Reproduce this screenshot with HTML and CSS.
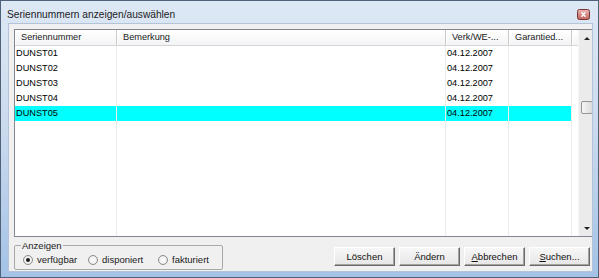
FILE: index.html
```html
<!DOCTYPE html>
<html lang="de">
<head>
	<meta charset="UTF-8">
	<title>Seriennummern anzeigen/auswählen</title>
	<link rel="stylesheet" href="styles.css">
</head>
<body>
	<div class="window">
		<div class="titlebar">
			<span class="title">Seriennummern anzeigen/auswählen</span>
			<svg class="close" width="13" height="11" viewBox="0 0 13 11">
				<defs>
					<linearGradient id="cg" x1="0" y1="0" x2="0" y2="1">
						<stop offset="0" stop-color="#ebb9b6"/>
						<stop offset="1" stop-color="#c0625e"/>
					</linearGradient>
				</defs>
				<rect x="0.5" y="0.5" width="12" height="10" rx="2" fill="url(#cg)" stroke="#7a3532"/>
				<path d="M4.5 3.3 L8.5 7.7 M8.5 3.3 L4.5 7.7" stroke="#fff" stroke-width="1.3"/>
			</svg>
		</div>

		<div class="client">
			<!-- Liste im Report-Modus -->
			<div class="listview">
				<div class="lv-main">
					<div class="lv-head">
						<div class="hcell c1">Seriennummer</div>
						<div class="hcell c2">Bemerkung</div>
						<div class="hcell c3">Verk/WE-...</div>
						<div class="hcell c4">Garantied...</div>
						<div class="hcell fill"></div>
					</div>
					<div class="lv-body">
						<div class="col c1">
							<div class="cell">DUNST01</div>
							<div class="cell">DUNST02</div>
							<div class="cell">DUNST03</div>
							<div class="cell">DUNST04</div>
							<div class="cell sel">DUNST05</div>
						</div>
						<div class="col c2">
							<div class="cell"></div>
							<div class="cell"></div>
							<div class="cell"></div>
							<div class="cell"></div>
							<div class="cell sel"></div>
						</div>
						<div class="col c3">
							<div class="cell">04.12.2007</div>
							<div class="cell">04.12.2007</div>
							<div class="cell">04.12.2007</div>
							<div class="cell">04.12.2007</div>
							<div class="cell sel">04.12.2007</div>
						</div>
						<div class="col c4">
							<div class="cell"></div>
							<div class="cell"></div>
							<div class="cell"></div>
							<div class="cell"></div>
							<div class="cell sel"></div>
						</div>
						<div class="col fill"></div>
					</div>
				</div>
				<div class="scrollbar">
					<div class="sb-btn"><span class="arrow up"></span></div>
					<div class="sb-track"><div class="sb-thumb"></div></div>
					<div class="sb-btn"><span class="arrow down"></span></div>
				</div>
			</div>

			<div class="bottom">
				<fieldset class="group">
					<legend>Anzeigen</legend>
					<div class="radios">
						<label class="opt o1"><span class="radio on"></span>verfügbar</label>
						<label class="opt o2"><span class="radio"></span>disponiert</label>
						<label class="opt"><span class="radio"></span>fakturiert</label>
					</div>
				</fieldset>
				<div class="buttons">
					<button>Löschen</button>
					<button>Ändern</button>
					<button><u>A</u>bbrechen</button>
					<button><u>S</u>uchen...</button>
				</div>
			</div>
		</div>
	</div>
</body>
</html>
```

FILE: styles.css
```css
html,body {
	margin: 0;
	padding: 0;
}
body {
	width: 599px;
	height: 278px;
	overflow: hidden;
	font-family: "Liberation Sans", Arial, sans-serif;
	font-size: 9.2px;
	color: #000;
}
.window {
	box-sizing: border-box;
	width: 599px;
	height: 278px;
	border: 1px solid #4f6278;
	padding: 0 5px 5px 7px;
	background: linear-gradient(#dde8f5, #cbdbee 45%, #a3c2e6);
	display: flex;
	flex-direction: column;
}
.titlebar {
	box-sizing: border-box;
	height: 22px;
	padding-top: 6px;
	display: flex;
	align-items: flex-start;
}
.title {
	flex: 1;
	font-size: 10.2px;
	line-height: 16px;
	color: #1c1c1c;
	margin-left: -1px;
}
.close {
	margin-top: 2px;
	margin-right: 3px;
}
.client {
	flex: 1;
	box-sizing: border-box;
	border: 1px solid #b3c4d8;
	background: #f0f0f0;
	padding: 5px 0 0 5px;
	display: flex;
	flex-direction: column;
	overflow: hidden;
}

/* Listview */
.listview {
	box-sizing: border-box;
	height: 208px;
	border: 1px solid #828790;
	border-right: 0;
	background: #fff;
	display: flex;
}
.lv-main {
	flex: 1;
	display: flex;
	flex-direction: column;
}
.lv-head {
	display: flex;
	height: 16px;
	box-sizing: border-box;
	border-bottom: 1px solid #d5d5d5;
	background: linear-gradient(#ffffff, #f3f4f6);
}
.hcell {
	box-sizing: border-box;
	border-right: 1px solid #c9c9c9;
	box-shadow: inset 1px 0 #fff;
	padding-left: 6px;
	line-height: 15px;
	color: #1a1a1a;
	white-space: nowrap;
}
.c1 { width: 102px; }
.c2 { width: 329px; }
.c3 { width: 63px; }
.c4 { width: 63px; }
.fill { flex: 1; border-right: 0; }
.lv-body {
	flex: 1;
	display: flex;
}
.col {
	box-sizing: border-box;
	border-right: 1px solid #ececec;
}
.col.fill {
	border-right: 0;
}
.cell {
	height: 15px;
	line-height: 15px;
	padding-left: 1px;
	white-space: nowrap;
}
.cell.sel {
	background: #00ffff;
}

/* Scrollbar */
.scrollbar {
	width: 13px;
	display: flex;
	flex-direction: column;
	background: #ebebeb;
	border-left: 1px solid #f6f6f6;
}
.sb-btn {
	height: 16px;
	display: flex;
	align-items: center;
	justify-content: center;
	padding-left: 3px;
}
.arrow {
	width: 0;
	height: 0;
	border-left: 3px solid transparent;
	border-right: 3px solid transparent;
}
.arrow.up { border-bottom: 3px solid #222; }
.arrow.down { border-top: 3px solid #222; }
.sb-track {
	flex: 1;
}
.sb-thumb {
	box-sizing: border-box;
	margin: 55px 0 0 2px;
	width: 12px;
	height: 13px;
	border: 1px solid #969696;
	border-radius: 2px;
	background: linear-gradient(to right, #f5f5f5, #dcdcdc);
}

/* Unterer Bereich */
.bottom {
	flex: 1;
	display: flex;
	align-items: flex-start;
	padding-right: 2px;
}
.group {
	margin: 3px 0 0 0;
	padding: 0;
	width: 209px;
	box-sizing: border-box;
	border: 1px solid #a9a9a9;
	border-radius: 2px;
}
.group legend {
	margin-left: 6px;
	padding: 0 1px;
	font-size: 9.5px;
	line-height: 11px;
	color: #1a1a1a;
}
.radios {
	display: flex;
	padding: 3px 0 4px 8px;
}
.opt {
	display: flex;
	align-items: center;
	gap: 4px;
	height: 11px;
	font-size: 9.5px;
	color: #1a1a1a;
}
.o1 { width: 65px; }
.o2 { width: 70px; }
.radio {
	box-sizing: border-box;
	width: 10px;
	height: 10px;
	border-radius: 50%;
	border: 1px solid #8a8a8a;
	background: radial-gradient(#ffffff, #e4e4e4);
	display: flex;
	align-items: center;
	justify-content: center;
}
.radio.on::after {
	content: "";
	width: 4px;
	height: 4px;
	border-radius: 50%;
	background: #1a1a1a;
}
.buttons {
	margin-left: auto;
	margin-top: 10px;
	display: flex;
	gap: 4px;
}
.buttons button {
	box-sizing: border-box;
	width: 61px;
	height: 19px;
	padding: 0;
	font-family: "Liberation Sans", Arial, sans-serif;
	font-size: 9.5px;
	color: #111;
	background: linear-gradient(#f7f7f7, #e6e6e6);
	border: 1px solid;
	border-color: #fff #6a6a6a #6a6a6a #fff;
	box-shadow: inset -1px -1px #a3a3a3;
}
```
